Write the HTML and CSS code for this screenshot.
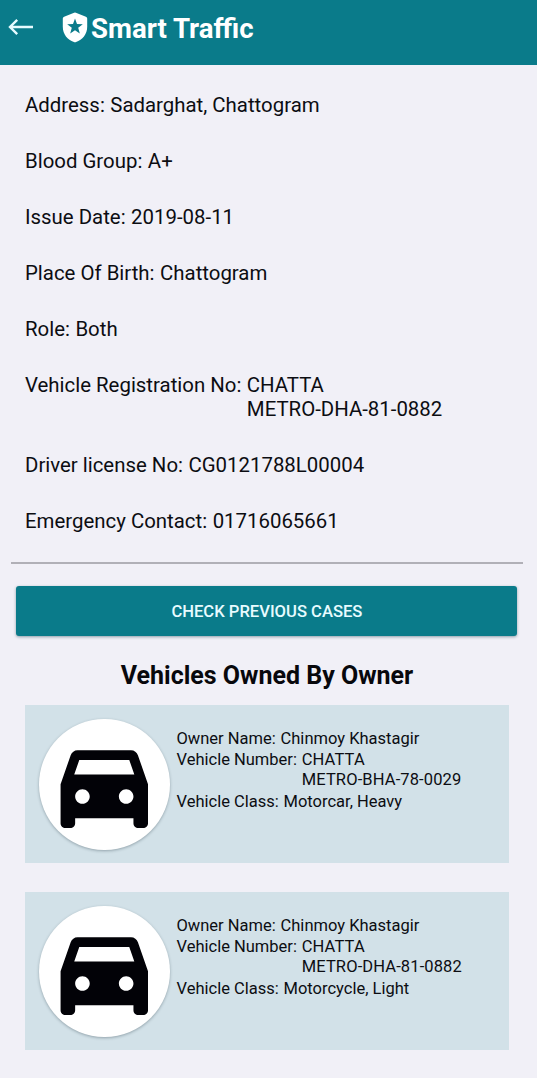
FILE: index.html
```html
<!DOCTYPE html>
<html lang="en">
<head>
<meta charset="utf-8">
<title>Smart Traffic</title>
<link rel="stylesheet" href="styles.css">
</head>
<body>
<svg class="defs" aria-hidden="true">
  <symbol id="car" viewBox="0 0 24 24"><path d="M18.92 6.01C18.72 5.42 18.16 5 17.5 5h-11c-.66 0-1.21.42-1.42 1.01L3 12v8c0 .55.45 1 1 1h1c.55 0 1-.45 1-1v-1h12v1c0 .55.45 1 1 1h1c.55 0 1-.45 1-1v-8l-2.08-5.99zM7.5 16c-.83 0-1.5-.67-1.5-1.5S6.67 13 7.5 13s1.5.67 1.5 1.5S8.33 16 7.5 16zm9 0c-.83 0-1.5-.67-1.5-1.5s.67-1.5 1.5-1.5 1.5.67 1.5 1.5-.67 1.5-1.5 1.5zM5.81 10l1.04-3h10.29l1.04 3H5.81z"/></symbol>
</svg>
<header class="bar">
  <svg class="back" viewBox="0 0 26 18"><path d="M25 9H2M9.2 1.8 2 9l7.2 7.2"/></svg>
  <svg class="shield" viewBox="0 0 26 31"><path fill-rule="evenodd" d="M12.1.8q.9-.4 1.8 0l10 3.900q1.300.5 1.300 1.900v8.200c0 7.400-4.800 13.300-11.100 15.300q-1.100.4-2.200 0C5.600 28.100.8 22.200.8 14.800V6.600q0-1.400 1.300-1.900zM13 6.500l2 5.500 5.800.2-4.600 3.600 1.600 5.600-4.800-3.200-4.800 3.200 1.600-5.600-4.600-3.600 5.800-.2z"/></svg>
  <h1 class="title">Smart Traffic</h1>
</header>
<main>
  <dl class="details">
    <div class="row"><dt>Address:</dt><dd>Sadarghat, Chattogram</dd></div>
    <div class="row"><dt>Blood Group:</dt><dd>A+</dd></div>
    <div class="row"><dt>Issue Date:</dt><dd>2019-08-11</dd></div>
    <div class="row"><dt>Place Of Birth:</dt><dd>Chattogram</dd></div>
    <div class="row"><dt>Role:</dt><dd>Both</dd></div>
    <div class="row"><dt>Vehicle Registration No:</dt><dd>CHATTA<br>METRO-DHA-81-0882</dd></div>
    <div class="row"><dt>Driver license No:</dt><dd>CG0121788L00004</dd></div>
    <div class="row"><dt>Emergency Contact:</dt><dd>01716065661</dd></div>
  </dl>
  <hr class="rule">
  <button class="check">CHECK PREVIOUS CASES</button>
  <h2 class="heading">Vehicles Owned By Owner</h2>
  <section class="card">
    <div class="avatar"><svg class="car"><use href="#car"/></svg></div>
    <dl class="info">
      <div class="row"><dt>Owner Name:</dt><dd>Chinmoy Khastagir</dd></div>
      <div class="row"><dt>Vehicle Number:</dt><dd class="plate">CHATTA<br>METRO-BHA-78-0029</dd></div>
      <div class="row"><dt>Vehicle Class:</dt><dd>Motorcar, Heavy</dd></div>
    </dl>
  </section>
  <section class="card">
    <div class="avatar"><svg class="car"><use href="#car"/></svg></div>
    <dl class="info">
      <div class="row"><dt>Owner Name:</dt><dd>Chinmoy Khastagir</dd></div>
      <div class="row"><dt>Vehicle Number:</dt><dd class="plate">CHATTA<br>METRO-DHA-81-0882</dd></div>
      <div class="row"><dt>Vehicle Class:</dt><dd>Motorcycle, Light</dd></div>
    </dl>
  </section>
</main>
</body>
</html>
```
FILE: styles.css
```css
* { box-sizing: border-box; margin: 0; padding: 0; }
body { background: #f1f0f7; color: #0c0d12; font-family: Roboto, sans-serif; height: 1078px; overflow: hidden; }
.defs { display: none; }
.bar { display: flex; align-items: flex-start; height: 65px; padding: 11px 8px 0 7.5px; background: #0a7b8a; color: #fff; }
.back { width: 26px; height: 18px; margin-top: 7px; fill: none; stroke: #e6fbff; stroke-width: 2.4; }
.shield { width: 26px; height: 31px; margin: .5px 0 0 28px; fill: #fff; }
.title { margin: 1px 0 0 3.5px; font-size: 27.6px; line-height: 34px; font-weight: 700; white-space: nowrap; }
.row { display: flex; gap: .27em; white-space: nowrap; }
.details { display: flex; flex-direction: column; gap: 32px; padding: 28px 25px 0; font-size: 20.4px; line-height: 24px; }
.rule { height: 2px; margin: 28.5px 14px 0 11px; border: 0; background: #b1b0b7; }
.check { display: block; width: 501px; height: 50px; margin: 22px 0 0 16.4px; padding-top: 1px; border: 0; border-radius: 3px; background: #0a7b8a; color: #e8fbff; font: 500 16.6px/49px Roboto, sans-serif; box-shadow: 0 1px 3px rgba(20, 60, 75, .45); }
.heading { margin-top: 25px; padding-right: 3px; text-align: center; font-size: 25px; line-height: 30px; color: #08080c; }
.card { display: flex; width: 484px; height: 158px; margin: 14px 0 0 25px; padding: 14px; background: #d2e1e8; }
.card + .card { margin-top: 29px; }
.avatar { display: grid; place-items: center; width: 130.5px; height: 131px; border-radius: 50%; background: #fff; box-shadow: 0 1px 3px rgba(30, 50, 60, .35); }
.car { width: 116.6px; height: 116.6px; fill: #020207; }
.info { display: flex; flex-direction: column; gap: 2.3px; margin: 10px 0 0 7px; font-size: 16.5px; line-height: 19.5px; }
.info .row { gap: .29em; }
.plate { letter-spacing: .12px; }
```
